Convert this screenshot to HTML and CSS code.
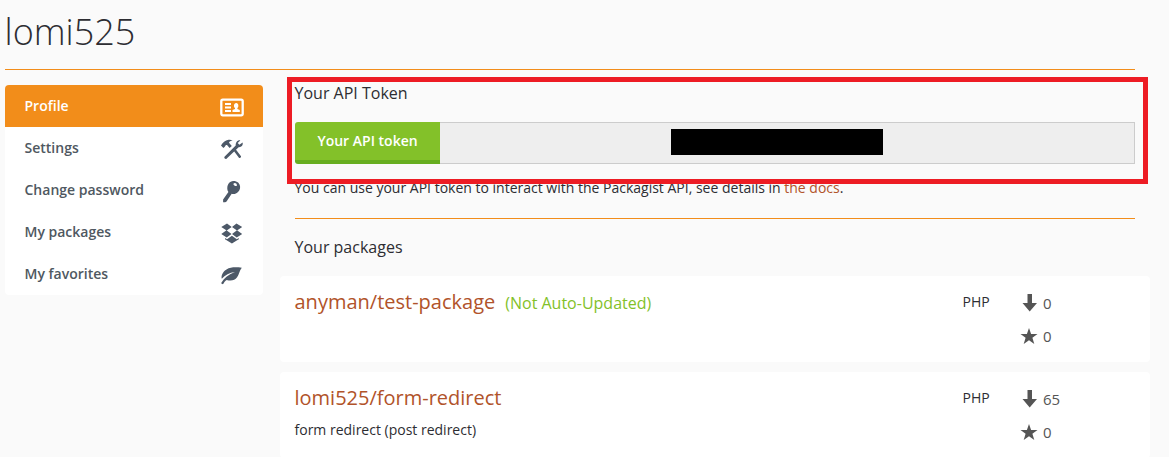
FILE: index.html
```html
<!DOCTYPE html>
<html lang="en">
<head>
<meta charset="utf-8">
<title>lomi525 - Packagist</title>
<link rel="stylesheet" href="styles.css">
</head>
<body>
<svg class="sprite" aria-hidden="true">
  <symbol id="down" viewBox="0 0 16 18"><path d="M5.500 0h4.500v9H15L7.700 17.500.500 9h5z"/></symbol>
  <symbol id="star" viewBox="0 0 18 16"><path d="M9 0l2.100 5.900h6.400l-5.100 3.900 1.900 6.100L9 12.300l-5.300 3.600 1.900-6.100L.5 5.900h6.400z"/></symbol>
</svg>
<main class="page">
  <h1 class="title">lomi525</h1>
  <div class="columns">
    <nav class="menu">
      <a class="menu-item active"><span>Profile</span>
        <svg class="menu-icon" viewBox="0 0 24 24"><rect x="1.300" y="3.700" width="21.400" height="15.600" rx="1.500" fill="none" stroke="currentColor" stroke-width="2.300"/><path d="M5 7h6v2H5zM5 10.500h6v2H5zM5 14h6v2H5zM12.500 16v-2l2.500-.9v-1c-1.500-1-1.400-5.100 1.200-5.100s2.700 4.100 1.200 5.100v1l2.400.9v2z"/></svg></a>
      <a class="menu-item"><span>Settings</span>
        <svg class="menu-icon" viewBox="0 0 24 24"><path d="M1 7.600c1.500-3 4.200-5.400 7.500-5.800 1.600-.2 3 .1 4.200.6-2 .2-3.300.8-3.700 2.300l2.800 3.300-2.200 2L7 7.100c-1.100-.1-1.700.4-2 1.500L3.400 10zM13.500 12.500l1.800-1.700 5.700 7.500c.5.800-1.100 2.300-1.900 1.600zM20.300 2.400l-2.600 2.700 1.700 1.700 3.200-2.200c.7 2.300-1 5-4 4.700L6.500 20.700c-.8.900-3-.9-2-1.900L15.700 7.500c-.2-3.200 2-5.600 4.600-5.100z"/></svg></a>
      <a class="menu-item"><span>Change password</span>
        <svg class="menu-icon" viewBox="0 0 24 24"><path fill-rule="evenodd" d="M13 .9c4-.2 7 2.200 7.100 5.800.2 3.900-2.800 7.300-7 7.300-.5 0-1 0-1.400-.2L6.700 21.200c-.7 1-1.700 1.300-3.600 1V19.500L8.400 12C5.800 7.800 8 1.200 13 .9zm1.700 2.200c-1.900.4-1.500 1.700-.3 2.500 1.300.9 2.600.6 2.500-.7-.1-1-1.100-1.900-2.200-1.800z"/></svg></a>
      <a class="menu-item"><span>My packages</span>
        <svg class="menu-icon" viewBox="0 0 24 24"><path d="M7 1.500l4.700 3.500-5 3.500L1.300 5zM16.500 1.500L12 5l5 3.500L22.200 5zM1.300 12l5.200-3.700L11.500 12 6.700 15.500zM22.200 12L17 8.300 12 12l4.700 3.500zM11.900 13.700l4.900 3.500 2-1.200v1.200L11.900 21.500 5 17.200V16l2 1.200z"/></svg></a>
      <a class="menu-item"><span>My favorites</span>
        <svg class="menu-icon" viewBox="0 0 24 24"><path d="M21.800 3.700c-2.400 2.800-2.600 6.500-4.700 9.500-2.300 3.300-6.300 4-10.400 2.700-1.600 1.100-2.700 2.300-3.500 4.200-1 .3-1.800 0-2-1C4 13.800 8.600 10.200 15 8 9.500 8.600 5 10.900 1.800 14.800.9 11.400 3 7.600 6.500 5.500c4.500-2.800 10-2.200 15.300-1.800z"/></svg></a>
    </nav>
    <div class="content">
      <section class="token">
        <h2 class="heading">Your API Token</h2>
        <div class="token-row">
          <button class="token-button">Your API token</button>
          <div class="token-field"><span class="redacted"></span></div>
        </div>
        <p class="note">You can use your API token to interact with the Packagist API, see details in <a class="link">the docs</a>.</p>
        <div class="highlight"></div>
      </section>
      <h2 class="heading packages-heading">Your packages</h2>
      <ul class="packages">
        <li class="package">
          <div class="package-info"><h3 class="package-name"><a class="link">anyman/test-package</a><small class="status">(Not Auto-Updated)</small></h3></div>
          <span class="language">PHP</span>
          <div class="stats">
            <span class="stat"><svg class="down"><use href="#down"/></svg>0</span>
            <span class="stat"><svg class="star"><use href="#star"/></svg>0</span>
          </div>
        </li>
        <li class="package">
          <div class="package-info"><h3 class="package-name"><a class="link">lomi525/form-redirect</a></h3><p class="description">form redirect (post redirect)</p></div>
          <span class="language">PHP</span>
          <div class="stats">
            <span class="stat"><svg class="down"><use href="#down"/></svg>65</span>
            <span class="stat"><svg class="star"><use href="#star"/></svg>0</span>
          </div>
        </li>
      </ul>
    </div>
  </div>
</main>
</body>
</html>
```
FILE: styles.css
```css
* { box-sizing: border-box; }
body { margin: 0; height: 457px; overflow: hidden; background: #fafafa; color: #2d2d32; font: 14px/20px "Open Sans", sans-serif; }
h1, h2, h3, p, ul { margin: 0; padding: 0; font-weight: 400; }
ul { list-style: none; }
.sprite { display: none; }
svg { fill: currentColor; flex: none; }
.page { padding-left: 5px; }
.title { width: 1130px; height: 70px; padding-top: 12px; border-bottom: 1px solid #f28d1a; font-size: 36px; line-height: 40px; font-weight: 300; text-indent: -0.5px; }
.columns { display: flex; align-items: flex-start; gap: 17px; }
.menu { width: 258px; margin-top: 15px; background: #fff; border-radius: 4px; overflow: hidden; }
.menu-item { display: flex; align-items: center; justify-content: space-between; height: 42px; padding: 0 19px 0 19.5px; color: #4f5861; font-weight: 600; }
.menu-item.active { background: #f28d1a; color: #fff; }
.menu-icon { width: 24px; height: 24px; margin-top: 3px; color: #4d5968; }
.active .menu-icon { color: #fff; }
.content { width: 870px; }
.token { position: relative; height: 149px; margin: 0 15px; padding-top: 12px; border-bottom: 1px solid #f28d1a; }
.heading { font-size: 16px; line-height: 22px; text-indent: -0.5px; }
.token-row { display: flex; height: 42px; margin-top: 18px; }
.token-button { width: 145px; padding: 0 0 1px; border: 0; border-bottom: 4px solid #67ae20; border-radius: 3px 0 0 3px; background: #83c129; color: #fff; font: 600 14px/20px "Open Sans", sans-serif; }
.token-field { flex: 1; padding: 6px 0 0 230px; border: 1px solid #ccc; border-left: 0; background: #eee; }
.redacted { display: block; width: 212px; height: 26px; margin-left: 1px; background: #000; }
.note { margin-top: 14px; text-indent: -0.5px; }
.link { color: #b1532a; }
.highlight { position: absolute; left: -8px; top: 7px; width: 861px; height: 107px; border: 5px solid #ed1c24; }
.packages-heading { margin: 17px 15px 18px; }
.packages { display: grid; gap: 10px; }
.package { display: grid; grid-template-columns: 667.5px 57.5px 1fr; height: 86px; padding: 12px 14px 0 15px; background: #fff; border-radius: 4px; }
.package-name { font-size: 20px; line-height: 28px; text-indent: -0.5px; }
.status { margin-left: 10px; color: #83c129; font-size: 16px; }
.description { margin-top: 8px; text-indent: -0.5px; }
.language { padding-top: 4px; }
.stats { display: grid; gap: 13px; align-content: start; padding-top: 5px; }
.stat { display: flex; align-items: center; height: 20px; color: #555; font-size: 15px; }
.down { width: 16px; height: 18px; margin: 0 5px 0 2px; }
.star { width: 18px; height: 16px; margin-right: 5px; }
```
